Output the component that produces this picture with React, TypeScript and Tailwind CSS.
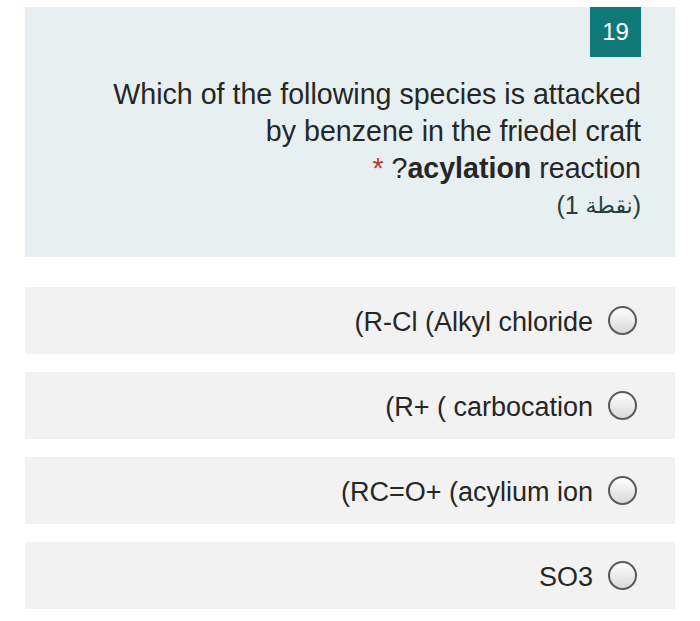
const options = [
  '(R-Cl (Alkyl chloride',
  '(R+ ( carbocation',
  '(RC=O+ (acylium ion',
  'SO3',
]

const Radio = () => (
  <span className="w-[29px] h-[29px] rounded-full border-2 border-[#5a5a5a] bg-gradient-to-b from-white to-[#d9d9d9] flex-shrink-0" />
)

const App = () => {
  return (
    <div
      className="w-[700px] h-[621px] bg-white pt-[7px] px-[25px]"
      style={{ fontFamily: '"Liberation Sans", Arial, sans-serif' }}
    >
      {/* Question */}
      <div className="h-[250px] bg-[#e7eff1] pr-[34px] flex flex-col items-end">
        <div className="w-[51px] h-[50px] bg-[#117878] text-white text-[24px] flex items-center justify-center">
          19
        </div>
        <div className="mt-[19px] text-right text-[28.6px] leading-[37px] text-[#262626]">
          <div>Which of the following species is attacked</div>
          <div>by benzene in the friedel craft</div>
          <div>
            <span className="text-[#c0392b]">*</span> ?<span className="font-bold">acylation</span> reaction
          </div>
          {/* points, kept in visual order */}
          <div className="flex justify-end text-[#20403f] text-[25px]">
            <span className="whitespace-pre">(1 </span>
            <span dir="rtl" style={{ fontFamily: '"DejaVu Sans", sans-serif' }} className="text-[22px]">
              {'\u0646\u0642\u0637\u0629'}
            </span>
            <span>)</span>
          </div>
        </div>
      </div>

      {/* Options */}
      <div className="mt-[30px] flex flex-col gap-[18px]">
        {options.map((opt) => (
          <div
            key={opt}
            className="h-[67px] bg-[#f2f2f2] flex items-center justify-end gap-[15px] pr-[38px]"
          >
            <span className="pt-[3px] text-[27px] text-[#262626]">{opt}</span>
            <Radio />
          </div>
        ))}
      </div>
    </div>
  )
}

export default App
